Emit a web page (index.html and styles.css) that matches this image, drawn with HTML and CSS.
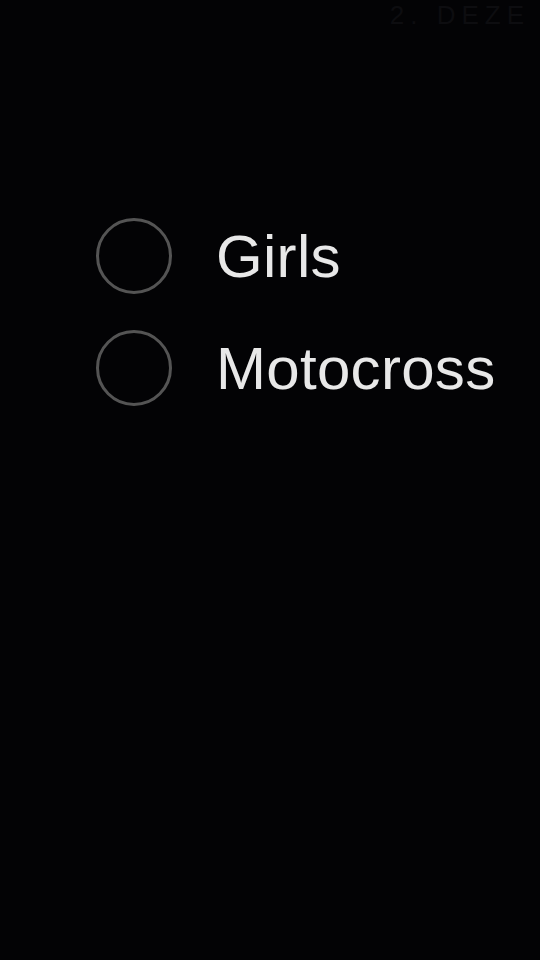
FILE: index.html
```html
<!DOCTYPE html>
<html lang="de">
<head>
<meta charset="utf-8"/>
<meta content="width=device-width, initial-scale=1.0" name="viewport"/>
<title>Kategorien</title>
<link rel="stylesheet" href="styles.css">
</head>
<body>
  <header class="top">
    <span class="date">2. DEZE</span>
  </header>

  <ul class="choices">
    <li class="choice">
      <span class="radio"></span>
      <span class="label">Girls</span>
    </li>
    <li class="choice">
      <span class="radio"></span>
      <span class="label">Motocross</span>
    </li>
  </ul>
</body>
</html>
```

FILE: styles.css
```css
html, body {
  margin: 0;
  height: 100%;
  background-color: #030305;
  font-family: 'Liberation Sans', Arial, sans-serif;
  color: #e6e6e6;
}
.top {
  height: 200px;
  display: flex;
  justify-content: flex-end;
  align-items: flex-start;
}
.date {
  font-size: 26px;
  line-height: 1.2;
  margin-right: 10px;
  color: #0d0d10;
  letter-spacing: 6px;
}
.choices {
  list-style: none;
  margin: 0;
  padding: 0 0 0 96px;
}
.choice {
  display: flex;
  align-items: center;
  height: 112px;
  gap: 44px;
}
.radio {
  box-sizing: border-box;
  width: 76px;
  height: 76px;
  border: 3px solid #545454;
  border-radius: 50%;
  flex-shrink: 0;
}
.label {
  font-size: 60px;
  letter-spacing: 0.3px;
  color: #e8e8e8;
}
```
